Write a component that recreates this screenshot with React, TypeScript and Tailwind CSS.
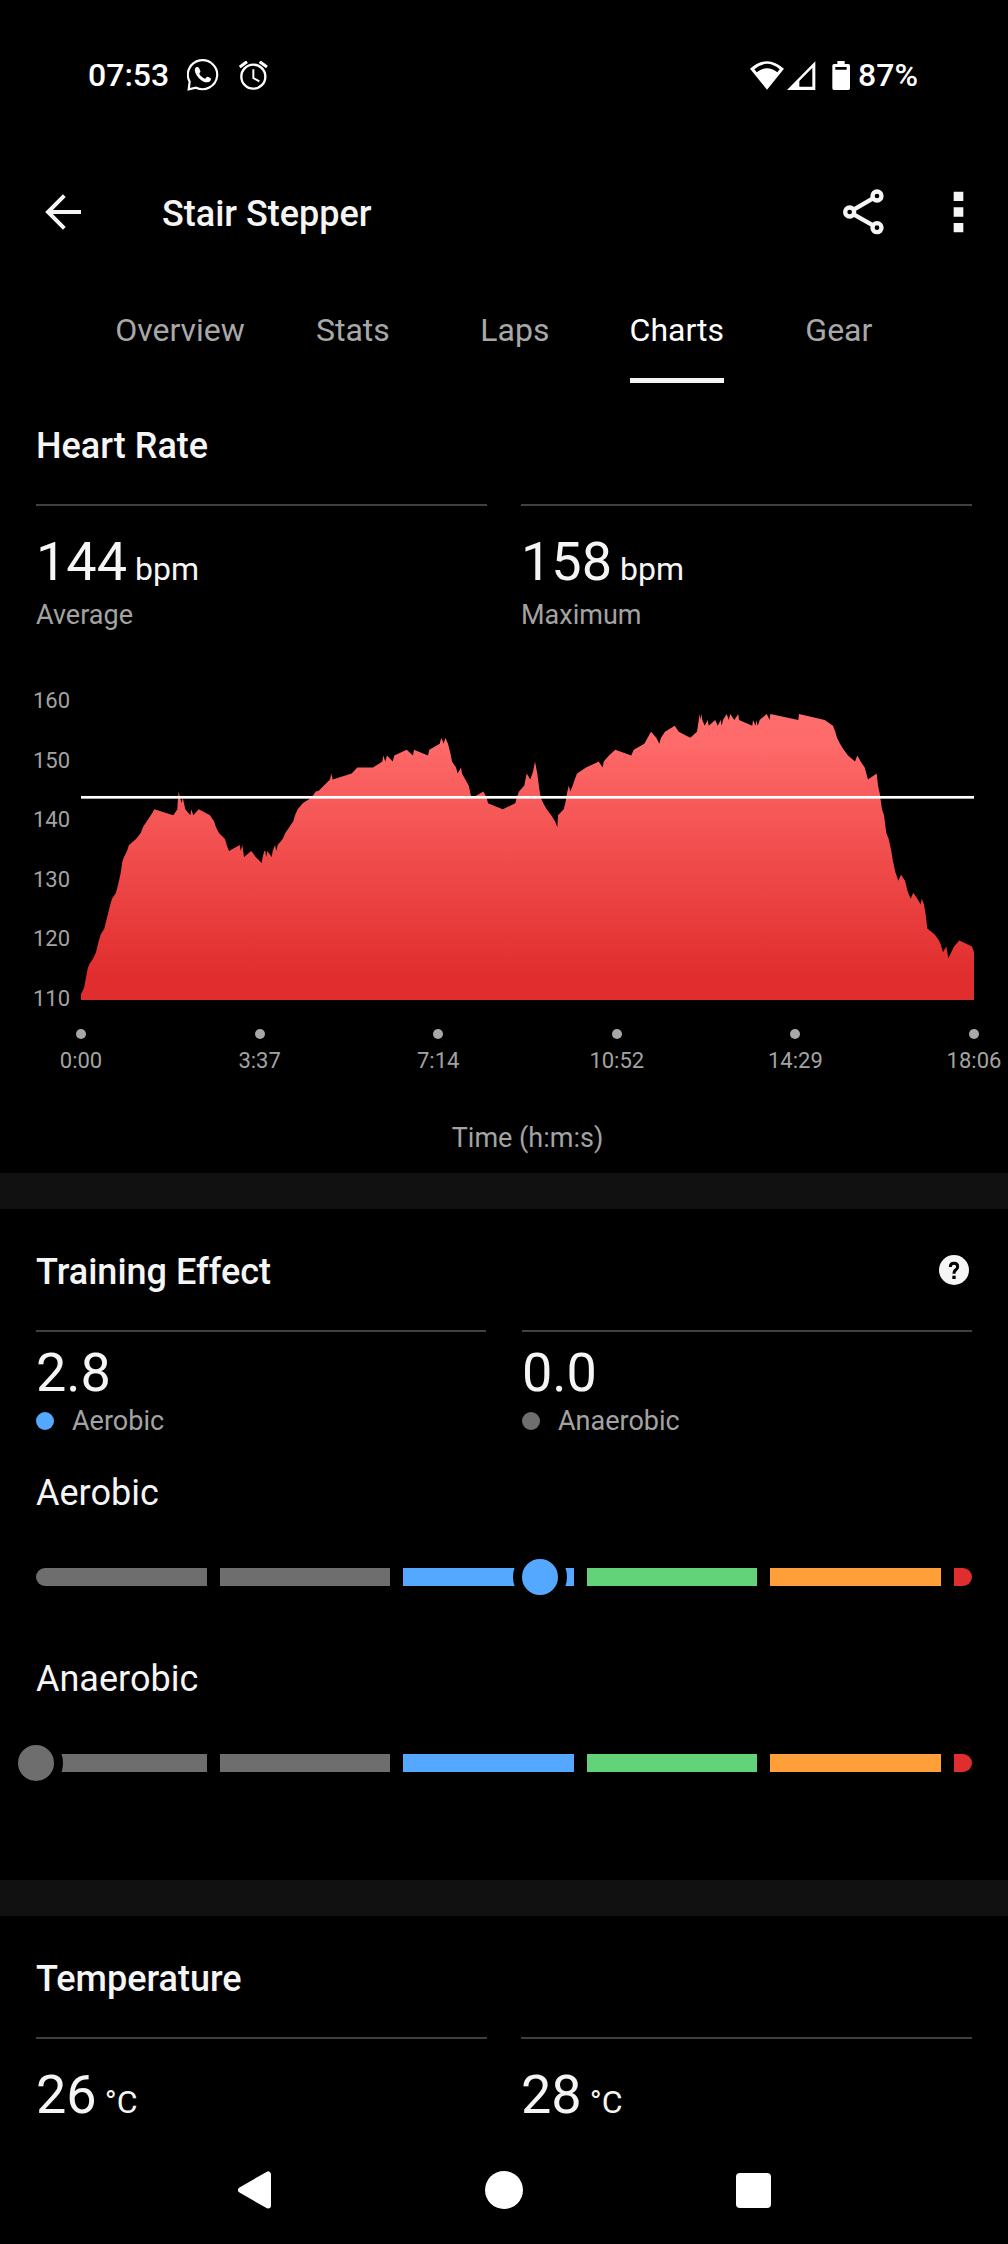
import React, { useState } from 'react';

const TABS = ['Overview', 'Stats', 'Laps', 'Charts', 'Gear'];

const Y_LABELS = [160, 150, 140, 130, 120, 110];
const X_LABELS = ['0:00', '3:37', '7:14', '10:52', '14:29', '18:06'];

const ZONES = ['bg-[#6e6e6e]', 'bg-[#6e6e6e]', 'bg-[#54a8ff]', 'bg-[#62d378]', 'bg-[#ff9f3a]'];
const SCALE_MAX = 5.2;

const PLOT_WIDTH = 893;
const PLOT_HEIGHT = 300;
const MIN_BPM = 110;
const AVG_BPM = 144;
const PX_PER_BPM = 5.96;

// [x, bpm]
const SAMPLES: [number, number][] = [
  [0, 111], [3, 112], [4.7, 113.5], [6.7, 115.3], [8.3, 116], [12.3, 117], [15, 118], [17.3, 119.6],
  [19.7, 121], [23.3, 122], [26.3, 124], [29.3, 126], [31, 127], [35, 128], [37.7, 129.8], [39.7, 131.3],
  [41.3, 133.2], [43, 134], [46, 135], [48, 136], [55, 137], [59.7, 138], [62.3, 139.1], [71.3, 141.4],
  [73.3, 142], [92.3, 141], [96.3, 142], [96.8, 143.5], [97.7, 145], [99, 144], [100.7, 143], [101.7, 144],
  [104.3, 142], [109.3, 141], [110.3, 142], [112.3, 141], [117.7, 142], [129, 141], [133, 140], [135, 139],
  [138, 138], [144, 137], [145.7, 136], [148, 135], [158.7, 136], [159.7, 135], [161.3, 136], [163, 134],
  [170.3, 135], [174.7, 134], [180.7, 133], [181.7, 134], [183.3, 135], [184.3, 135], [185.3, 134], [186.3, 135],
  [190.7, 134], [191.7, 135], [194, 136], [195.3, 135], [196.7, 136], [201.7, 137], [204.3, 138], [212.3, 140],
  [214, 141], [216.7, 142], [221.7, 143], [230.7, 144], [234.7, 145], [237.7, 145.1], [249, 147], [250.3, 148],
  [251.7, 147], [270.7, 148], [276.3, 149], [292, 149], [301.3, 150], [302.3, 151], [304.3, 150], [306, 151],
  [311.7, 150], [313.3, 151], [325.7, 152], [332, 151], [333, 152], [347, 151], [348.3, 152], [358.7, 153],
  [360.3, 154], [362.7, 153], [364.3, 154], [367, 153], [369.3, 151.5], [371, 150], [375, 149], [376.7, 148],
  [380, 149], [381, 148], [384.3, 147], [387.7, 146], [390.3, 144], [393.3, 144.1], [402.3, 145], [405.7, 144],
  [407, 143], [421.7, 142], [434.3, 143], [435.7, 144], [438, 145], [443.3, 146], [445.7, 148], [449.3, 147],
  [452, 148.3], [454, 150], [456.3, 148], [458.3, 145.4], [459.7, 144], [462.3, 143], [465.7, 142], [470.3, 141],
  [474, 140], [476.3, 139], [477, 141], [482.7, 142], [484.3, 143], [486, 144.7], [487.7, 146], [489.3, 145],
  [491.7, 146], [493.7, 147], [496, 148], [505, 149], [517.7, 150], [521.7, 149], [522.7, 150], [528, 151],
  [534.3, 152], [550.3, 151], [552.7, 152], [563.3, 153], [570, 155], [575.3, 154], [578.3, 153], [580, 154],
  [584, 155], [593.7, 156], [597.7, 155], [609.3, 154], [616, 155], [618.7, 158], [619.3, 157], [620.3, 158],
  [621.3, 157], [623.7, 156], [626.7, 157], [627.7, 156], [634.3, 157], [636.7, 156], [639.7, 157], [640.7, 156],
  [642, 157], [645.7, 158], [647.7, 157], [649.3, 158], [653.3, 157], [657.3, 158], [658, 157], [671.3, 156],
  [672, 157], [674.7, 156], [675.3, 157], [676.7, 156], [678.7, 157], [685.7, 158], [688.7, 157], [689.3, 158],
  [717.3, 157], [718, 158], [743.7, 157], [752, 156], [754.3, 155], [756, 154], [759, 153], [762.7, 152],
  [767, 151], [774, 150], [776.3, 151], [779.7, 150], [783.7, 149], [787, 147], [795.7, 148], [797, 146],
  [798.7, 144.7], [801, 142], [803, 141], [805.3, 138], [807.7, 137], [810.3, 135], [811.7, 133.5], [814.3, 131.5],
  [815.3, 131], [817.3, 130], [820, 131], [824, 130], [826.7, 128.2], [829.7, 127], [832.3, 128], [836.3, 127],
  [839.7, 126], [840.7, 127], [843, 126], [844.7, 124.3], [846.3, 122], [853.7, 121], [858, 120], [860, 119.2],
  [862, 118], [865.3, 119], [867.3, 117], [870.3, 118], [873, 119], [878.3, 120], [891, 119], [893, 118],
];

const toY = (bpm: number) => PLOT_HEIGHT - (bpm - MIN_BPM) * PX_PER_BPM;

const areaPoints = [
  `0,${PLOT_HEIGHT}`,
  ...SAMPLES.map(([x, bpm]) => `${x},${toY(bpm).toFixed(1)}`),
  `${PLOT_WIDTH},${PLOT_HEIGHT}`,
].join(' ');

const StatusBar: React.FC = () => (
  <div className="flex h-[150px] items-center justify-between pr-[90px] pl-[88px] text-[32px] font-medium text-white">
    <div className="flex items-center">
      <span>07:53</span>
      <svg className="ml-[18px] h-8 w-8" viewBox="0 0 96 96" fill="none">
        <path d="M8 68A44 43.500 0 1 1 27 86L5 91Z" stroke="currentColor" strokeWidth="6.500" />
        <path
          d="M27 25C22 29 22 38 28 47C36 60 47 69 60 70C67 70 72 66 72 60C72 57 70 57 62 53C58 52 57 59 54 59C48 58 40 50 37 45C36 42 42 40 40 36L36 27C34 23 30 23 27 25Z"
          fill="currentColor"
        />
      </svg>
      <svg className="ml-5 h-[29px] w-[29px]" viewBox="716 94 87 87" fill="none" stroke="currentColor">
        <circle cx="759" cy="141" r="36" strokeWidth="7" />
        <path d="M718 112L740 96M778 96L800 112" strokeWidth="9" />
        <path d="M759 119V145L777 155" strokeWidth="6" />
      </svg>
    </div>
    <div className="flex items-center">
      <svg className="h-[29px] w-[34px]" viewBox="735 92 102 87" fill="currentColor">
        <path fillRule="evenodd" d="M735 115Q786 70 837 115L786 178ZM748 117L755 126Q786 101 817 126L824 117Q786 84 748 117Z" />
      </svg>
      <svg className="ml-[3px] h-[29px] w-[29px]" viewBox="846 92 87 87" fill="currentColor">
        <path fillRule="evenodd" d="M846 179L931 93V179ZM883 152V169H922V112Z" />
      </svg>
      <svg className="ml-4 h-[29px] w-[18px]" viewBox="981 90 54 87" fill="currentColor">
        <path fillRule="evenodd" d="M997 90H1019V99H1030Q1035 99 1035 104V172Q1035 177 1030 177H987Q982 177 982 172V104Q982 99 987 99H997ZM991 108V116H1025V108Z" />
      </svg>
      <span className="ml-2">87%</span>
    </div>
  </div>
);

const Header: React.FC = () => (
  <header className="flex h-[124px] items-center pr-[41px] pl-[45px]">
    <button aria-label="Back">
      <svg className="h-9 w-9" viewBox="135 492 108 108" fill="none" stroke="currentColor" strokeWidth="12">
        <path d="M243 546H146M193 497L144 546L193 595" />
      </svg>
    </button>
    <h1 className="ml-[81px] pt-[3px] text-4xl font-medium">Stair Stepper</h1>
    <button aria-label="Share" className="ml-auto">
      <svg className="h-[46px] w-[41px]" viewBox="1016 477 123 138" fill="none" stroke="currentColor" strokeWidth="13">
        <path d="M1106 505L1048 539M1048 553L1106 586" />
        <circle cx="1118" cy="498" r="13.500" />
        <circle cx="1036" cy="546" r="13.500" />
        <circle cx="1118" cy="593" r="13.500" />
      </svg>
    </button>
    <button aria-label="More options" className="ml-[67px]">
      <svg className="h-[42px] w-4" viewBox="1340 483 48 126" fill="currentColor">
        <path d="M1348 485h29v28h-29zM1348 532h29v28h-29zM1348 579h29v28h-29z" />
      </svg>
    </button>
  </header>
);

const SectionTitle: React.FC<{ title: string; children?: React.ReactNode }> = ({ title, children }) => (
  <div className="flex h-[121px] items-center justify-between px-9 pt-1">
    <h2 className="text-4xl font-medium">{title}</h2>
    {children}
  </div>
);

const Stat: React.FC<{ value: string; unit: string; label?: string }> = ({ value, unit, label }) => (
  <div className="border-t-2 border-[#404040] pt-6">
    <p className="flex items-baseline gap-2 text-[54px] leading-[64px]">
      {value}
      <span className="text-[32px] leading-none">{unit}</span>
    </p>
    {label && <p className="text-[27px] leading-[42px] text-[#a3a3a3]">{label}</p>}
  </div>
);

const EffectStat: React.FC<{ value: string; label: string; dot: string }> = ({ value, label, dot }) => (
  <div className="border-t-2 border-[#404040] pt-[9px]">
    <p className="text-[54px] leading-[64px]">{value}</p>
    <p className="flex items-center gap-[18px] text-[27px] leading-8 text-[#a3a3a3]">
      <span className={`h-[18px] w-[18px] rounded-full ${dot}`} />
      {label}
    </p>
  </div>
);

const HeartRateChart: React.FC = () => (
  <div className="mt-[53px] flex gap-[11px] pr-[34px] pb-[17px] pl-[33px] text-[22px] leading-6 text-[#a3a3a3]">
    <div className="flex h-[322px] w-[37px] flex-col justify-between text-right">
      {Y_LABELS.map((v) => (
        <span key={v}>{v}</span>
      ))}
    </div>
    <div className="flex-1 pt-[11px]">
      <svg
        className="block h-[300px] w-full"
        viewBox={`0 0 ${PLOT_WIDTH} ${PLOT_HEIGHT}`}
        preserveAspectRatio="none"
        role="img"
        aria-label="Heart rate over time"
      >
        <defs>
          <linearGradient id="hr" x1="0" y1="0" x2="0" y2="1">
            <stop offset="0" stopColor="#ff6d6d" />
            <stop offset="0.1" stopColor="#ff6a6a" />
            <stop offset="0.92" stopColor="#e12d2d" />
            <stop offset="1" stopColor="#e02d2d" />
          </linearGradient>
        </defs>
        <polygon points={areaPoints} fill="url(#hr)" />
        <rect x="0" y={toY(AVG_BPM) - 1.4} width={PLOT_WIDTH} height="2.700" fill="#fff" />
      </svg>
      <div className="mt-[29px] flex justify-between">
        {X_LABELS.map((t) => (
          <div key={t} className="flex w-0 flex-col items-center gap-[10px]">
            <span className="h-[10px] w-[10px] rounded-full bg-[#a8a8a8]" />
            <span className="whitespace-nowrap">{t}</span>
          </div>
        ))}
      </div>
      <p className="mt-[47px] text-center text-[27px] leading-9">Time (h:m:s)</p>
    </div>
  </div>
);

const ZoneBar: React.FC<{ label: string; value: number; thumb: string; className: string }> = ({ label, value, thumb, className }) => (
  <div className={className}>
    <h3 className="text-4xl leading-[48px]">{label}</h3>
    <div
      role="meter"
      aria-label={label}
      aria-valuenow={value}
      aria-valuemin={0}
      aria-valuemax={SCALE_MAX}
      className="relative mt-[51px] flex h-[18px] gap-[13px]"
    >
      {ZONES.map((zone, i) => (
        <span key={i} className={`flex-1 ${zone} ${i === 0 ? 'rounded-l-full' : ''}`} />
      ))}
      <span className="w-[18px] rounded-r-full bg-[#e02d2d]" />
      <span
        className={`absolute top-1/2 h-[54px] w-[54px] -translate-x-1/2 -translate-y-1/2 rounded-full border-[9px] border-black ${thumb}`}
        style={{ left: `${(value / SCALE_MAX) * 100}%` }}
      />
    </div>
  </div>
);

const NavBar: React.FC = () => (
  <nav className="mt-auto flex h-[108px] items-center justify-center gap-[211px] text-white">
    <button aria-label="System back">
      <svg className="h-[38px] w-[38px]" viewBox="0 0 38 38" fill="currentColor" stroke="currentColor" strokeWidth="6" strokeLinejoin="round">
        <path d="M5 19L32 3.500V34.500Z" />
      </svg>
    </button>
    <button aria-label="Home" className="h-[38px] w-[38px] rounded-full bg-white" />
    <button aria-label="Recent apps" className="flex h-[38px] w-[38px] items-center justify-center">
      <span className="h-[35px] w-[35px] rounded bg-white" />
    </button>
  </nav>
);

const App: React.FC = () => {
  const [activeTab, setActiveTab] = useState('Charts');

  return (
    <div className="flex min-h-screen flex-col overflow-x-hidden bg-black font-[Roboto,sans-serif] text-[#f5f5f5]">
      <StatusBar />
      <Header />

      <div role="tablist" className="flex h-[109px] justify-center text-[32px] leading-10">
        {TABS.map((tab) => (
          <button
            key={tab}
            role="tab"
            aria-selected={tab === activeTab}
            onClick={() => setActiveTab(tab)}
            className="flex min-w-[162px] justify-center px-[27px] pt-9"
          >
            <span className={`h-full border-b-[5px] ${tab === activeTab ? 'border-[#f5f5f5] text-white' : 'border-transparent text-[#a8a8a8]'}`}>
              {tab}
            </span>
          </button>
        ))}
      </div>

      {/* Heart rate */}
      <section>
        <SectionTitle title="Heart Rate" />
        <div className="grid grid-cols-2 gap-[34px] px-9">
          <Stat value="144" unit="bpm" label="Average" />
          <Stat value="158" unit="bpm" label="Maximum" />
        </div>
        <HeartRateChart />
      </section>

      {/* Training effect */}
      <section className="border-t-[36px] border-[#111111] pb-[108px]">
        <SectionTitle title="Training Effect">
          <button aria-label="Training effect help" className="mr-[3px] mb-[3px]">
            <svg className="h-[30px] w-[30px]" viewBox="0 0 90 90">
              <circle cx="45" cy="45" r="45" fill="currentColor" />
              <path d="M34 36Q34 25 45 25Q56 25 56 35Q56 40 50.500 44Q45 48 45 56" fill="none" stroke="#000" strokeWidth="9" />
              <rect x="40" y="62" width="10" height="10" fill="#000" />
            </svg>
          </button>
        </SectionTitle>
        <div className="grid grid-cols-2 gap-9 px-9">
          <EffectStat value="2.8" label="Aerobic" dot="bg-[#54a8ff]" />
          <EffectStat value="0.0" label="Anaerobic" dot="bg-[#6e6e6e]" />
        </div>
        <div className="px-9">
          <ZoneBar label="Aerobic" value={2.8} thumb="bg-[#54a8ff]" className="mt-8" />
          <ZoneBar label="Anaerobic" value={0} thumb="bg-[#6e6e6e]" className="mt-[69px]" />
        </div>
      </section>

      {/* Temperature */}
      <section className="border-t-[36px] border-[#111111]">
        <SectionTitle title="Temperature" />
        <div className="grid grid-cols-2 gap-[34px] px-9">
          <Stat value="26" unit="°C" />
          <Stat value="28" unit="°C" />
        </div>
      </section>

      <NavBar />
    </div>
  );
};

export default App;
